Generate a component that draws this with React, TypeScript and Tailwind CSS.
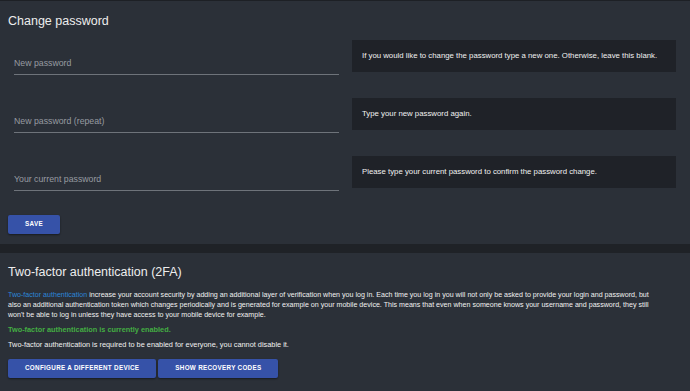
const font = { fontFamily: '"Liberation Sans", Arial, sans-serif' };

const rows = [
  {
    label: 'New password',
    help: 'If you would like to change the password type a new one. Otherwise, leave this blank.',
  },
  { label: 'New password (repeat)', help: 'Type your new password again.' },
  {
    label: 'Your current password',
    help: 'Please type your current password to confirm the password change.',
  },
];

function Button({ children }: { children: React.ReactNode }) {
  return (
    <button
      type="button"
      className="h-[19px] px-[17px] bg-[#3652a8] rounded-[2px] text-white font-bold uppercase text-[6.3px] tracking-[0.3px] leading-none shadow-[0_1px_2px_rgba(0,0,0,0.45)]"
    >
      {children}
    </button>
  );
}

function PasswordRow({ label, help }: { label: string; help: string }) {
  return (
    <div className="flex gap-[13px] pl-[14px] pr-[14px]">
      <div className="w-[325px] h-[35px] flex flex-col justify-end">
        <input
          type="password"
          placeholder={label}
          className="w-full h-[24px] bg-transparent border-b border-[#6e737a] text-[8.75px] text-[#e5e5e5] placeholder:text-[#979ba1] outline-none"
        />
      </div>
      <div className="flex-1 h-[32px] bg-[#1f2228] flex items-center px-[10px] text-[7.8px] text-[#f1f1f1]">
        {help}
      </div>
    </div>
  );
}

export default function App() {
  return (
    <div className="w-[690px] h-[391px] bg-[#2b3038] overflow-hidden" style={font}>
      <section className="border-t border-[#1d2025]">
        <h2 className="px-[8px] pt-[12px] h-[39px] text-[12.5px] leading-[16px] text-[#ededed]">
          Change password
        </h2>
        <div className="flex flex-col gap-[23px]">
          {rows.map((r) => (
            <PasswordRow key={r.label} label={r.label} help={r.help} />
          ))}
        </div>
        <div className="flex px-[8px] pt-[24px] pb-[10px]">
          <Button>Save</Button>
        </div>
      </section>

      <div className="h-[9px] bg-[#1f2227]" />

      <section className="px-[8px] pt-[11px]">
        <h2 className="text-[12.5px] leading-[16px] text-[#ededed]">
          Two-factor authentication (2FA)
        </h2>
        <p className="mt-[10px] text-[7.1px] leading-[10px] text-[#f1f1f1] whitespace-nowrap">
          <span className="text-[#2b87d8]">Two-factor authentication</span> increase your account
          security by adding an additional layer of verification when you log in. Each time you log
          in you will not only be asked to provide your login and password, but
          <br />
          also an additional authentication token which changes periodically and is generated for
          example on your mobile device. This means that even when someone knows your username and
          password, they still
          <br />
          won't be able to log in unless they have access to your mobile device for example.
        </p>
        <p className="mt-[5px] text-[7.35px] leading-[10px] font-bold text-[#43ad43]">
          Two-factor authentication is currently enabled.
        </p>
        <p className="mt-[5px] text-[7.35px] leading-[10px] text-[#f1f1f1]">
          Two-factor authentication is required to be enabled for everyone, you cannot disable it.
        </p>
        <div className="mt-[9px] flex gap-[2px]">
          <Button>Configure a different device</Button>
          <Button>Show recovery codes</Button>
        </div>
      </section>
    </div>
  );
}
